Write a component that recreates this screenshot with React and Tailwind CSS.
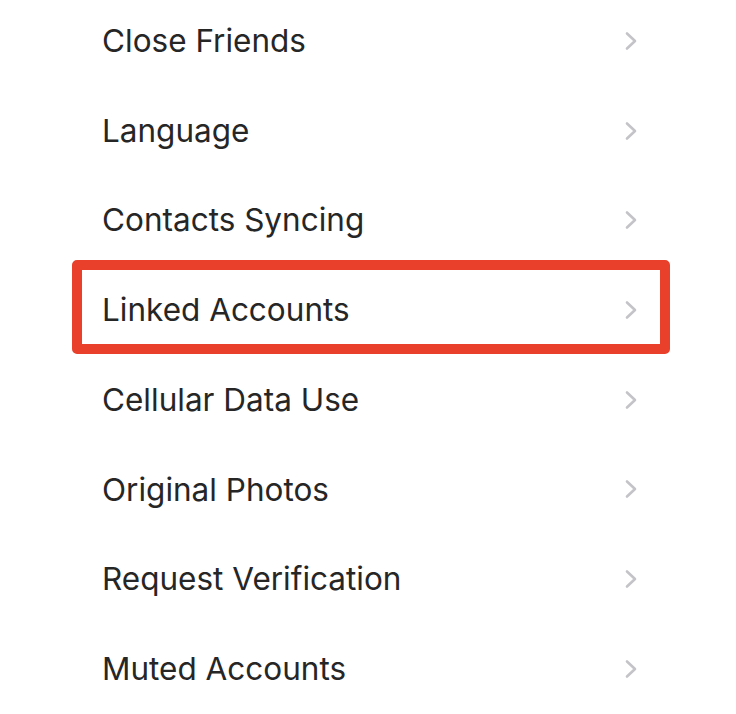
const items = [
  "Close Friends",
  "Language",
  "Contacts Syncing",
  "Linked Accounts",
  "Cellular Data Use",
  "Original Photos",
  "Request Verification",
  "Muted Accounts",
];

function Chevron() {
  return (
    <svg width="14" height="20" viewBox="0 0 14 20" fill="none">
      <path d="M3 2.5 L11 10 L3 17.5" stroke="#c4c4c8" strokeWidth="2.6" strokeLinecap="round" strokeLinejoin="round" />
    </svg>
  );
}

export default function App() {
  return (
    <div className="w-[736px] h-[714px] overflow-hidden bg-white font-['Inter','Liberation_Sans',sans-serif]">
      <div className="-mt-[4px] flex flex-col">
        {items.map((label) => (
          <div key={label} className="relative flex h-[89.7px] items-center justify-between pl-[102px] pr-[98px]">
            <span className="text-[31.5px] leading-none text-[#262626]">{label}</span>
            <Chevron />
            {label === "Linked Accounts" && (
              <div className="absolute left-[72px] right-[66px] top-[-5px] bottom-[1px] rounded-[5px] border-[10px] border-[#e8402a]" />
            )}
          </div>
        ))}
      </div>
    </div>
  );
}
